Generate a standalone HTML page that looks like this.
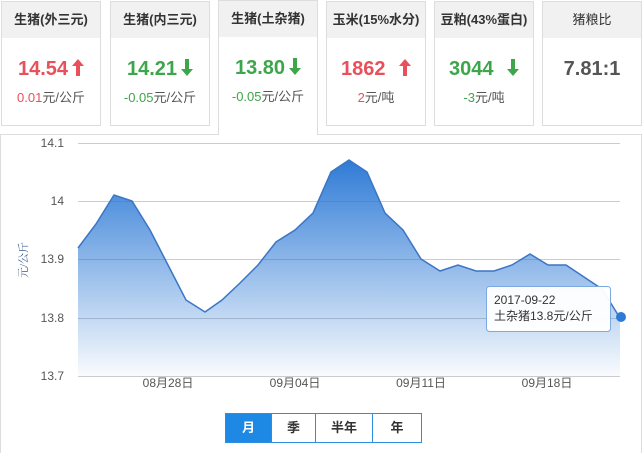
<!DOCTYPE html>
<html><head><meta charset="utf-8"><style>
body{margin:0;width:642px;height:453px;background:#fff;font-family:"Liberation Sans","Noto Sans CJK SC",sans-serif;position:relative;overflow:hidden}
.card{position:absolute;top:1px;width:98px;height:123px;border:1px solid #ddd;background:#fff;text-align:center}
.card .h{height:36px;background:#f1f1f1;font-size:13px;line-height:36px;color:#333;font-weight:bold}
.card .v{font-size:20px;font-weight:bold;margin-top:19px;line-height:24px}
.card .s{font-size:13px;color:#555;margin-top:6px}
.r{color:#e8505b}.g{color:#3da64a}
.act{top:0;height:134px;border-bottom:none;z-index:2}
.panel{position:absolute;left:0;top:134px;width:640px;height:318px;border:1px solid #ddd;border-bottom:none}
.btns{position:absolute;left:225px;top:413px;height:28px;border:1px solid #2b8ee0;display:flex;font-size:13px;font-weight:bold;color:#333}
.btns div{line-height:28px;text-align:center;border-left:1px solid #2b8ee0}
.ar{display:inline-block;vertical-align:-1px;margin-left:4px}
</style></head><body>
<div class="card" style="left:1px"><div class="h">生猪(外三元)</div><div class="v r">14.54<svg class="ar" width="12" height="17" viewBox="0 0 12 17"><path d="M6,0 L12,7 L8,7 L8,17 L4,17 L4,7 L0,7 Z" fill="#e8505b"/></svg></div><div class="s"><span class="r">0.01</span>元/公斤</div></div>
<div class="card" style="left:110px"><div class="h">生猪(内三元)</div><div class="v g">14.21<svg class="ar" width="12" height="17" viewBox="0 0 12 17"><path d="M6,17 L12,10 L8,10 L8,0 L4,0 L4,10 L0,10 Z" fill="#3da64a"/></svg></div><div class="s"><span class="g">-0.05</span>元/公斤</div></div>
<div class="card act" style="left:218px"><div class="h">生猪(土杂猪)</div><div class="v g">13.80<svg class="ar" width="12" height="17" viewBox="0 0 12 17"><path d="M6,17 L12,10 L8,10 L8,0 L4,0 L4,10 L0,10 Z" fill="#3da64a"/></svg></div><div class="s"><span class="g">-0.05</span>元/公斤</div></div>
<div class="card" style="left:326px"><div class="h">玉米(15%水分)</div><div class="v r">1862 <svg class="ar" style="margin-left:8px" width="12" height="17" viewBox="0 0 12 17"><path d="M6,0 L12,7 L8,7 L8,17 L4,17 L4,7 L0,7 Z" fill="#e8505b"/></svg></div><div class="s"><span class="r">2</span>元/吨</div></div>
<div class="card" style="left:434px"><div class="h">豆粕(43%蛋白)</div><div class="v g">3044 <svg class="ar" style="margin-left:8px" width="12" height="17" viewBox="0 0 12 17"><path d="M6,17 L12,10 L8,10 L8,0 L4,0 L4,10 L0,10 Z" fill="#3da64a"/></svg></div><div class="s"><span class="g">-3</span>元/吨</div></div>
<div class="card" style="left:542px"><div class="h" style="font-weight:normal">猪粮比</div><div class="v" style="color:#555">7.81:1</div></div>
<div class="panel"></div>
<svg width="642" height="453" style="position:absolute;left:0;top:0">
<defs><linearGradient id="gr" x1="0" y1="0" x2="0" y2="1"><stop offset="0" stop-color="#2f7bd6"/><stop offset="1" stop-color="#2f7bd6" stop-opacity="0.03"/></linearGradient></defs>
<g stroke="#ccc" stroke-width="1">
<line x1="78" y1="143.5" x2="620" y2="143.5"/><line x1="78" y1="201.5" x2="620" y2="201.5"/><line x1="78" y1="259.5" x2="620" y2="259.5"/><line x1="78" y1="318.5" x2="620" y2="318.5"/><line x1="78" y1="376.5" x2="620" y2="376.5"/>
</g>
<path d="M78,376 L78,248 L96,224 L114,195 L132,201 L150,230 L168,265 L186,300 L205,312 L222,300 L240,283 L258,265 L276,242 L295,230 L313,213 L331,172 L349,160 L367,172 L385,213 L403,230 L421,259 L440,271 L458,265 L476,271 L494,271 L512,265 L530,254 L548,265 L566,265 L584,277 L602,289 L620,318 L620,376 Z" fill="url(#gr)"/>
<path d="M78,248 L96,224 L114,195 L132,201 L150,230 L168,265 L186,300 L205,312 L222,300 L240,283 L258,265 L276,242 L295,230 L313,213 L331,172 L349,160 L367,172 L385,213 L403,230 L421,259 L440,271 L458,265 L476,271 L494,271 L512,265 L530,254 L548,265 L566,265 L584,277 L602,289 L620,318" fill="none" stroke="#3b75c4" stroke-width="1.5"/>
<circle cx="621" cy="317" r="5" fill="#2e7bd6"/>
<g font-size="12" fill="#555" text-anchor="end"><text x="64" y="147">14.1</text><text x="64" y="205">14</text><text x="64" y="263">13.9</text><text x="64" y="322">13.8</text><text x="64" y="380">13.7</text></g>
<g font-size="12" fill="#555" text-anchor="middle"><text x="168" y="387">08月28日</text><text x="295" y="387">09月04日</text><text x="421" y="387">09月11日</text><text x="547" y="387">09月18日</text></g>
<text transform="translate(27,260) rotate(-90)" font-size="11" fill="#3b5a8a" text-anchor="middle" font-family="Liberation Serif,Noto Serif CJK SC,serif">元/公斤</text>
<rect x="486.5" y="286.5" width="124" height="45" rx="3" fill="#fff" fill-opacity="0.95" stroke="#7ca9e0"/>
<text x="494" y="304" font-size="12" fill="#333">2017-09-22</text>
<text x="494" y="320" font-size="12" fill="#333">土杂猪13.8元/公斤</text>
</svg>
<div class="btns"><div style="width:45px;background:#1e88e5;color:#fff;border-left:none">月</div><div style="width:43px">季</div><div style="width:56px">半年</div><div style="width:48px">年</div></div>
</body></html>
